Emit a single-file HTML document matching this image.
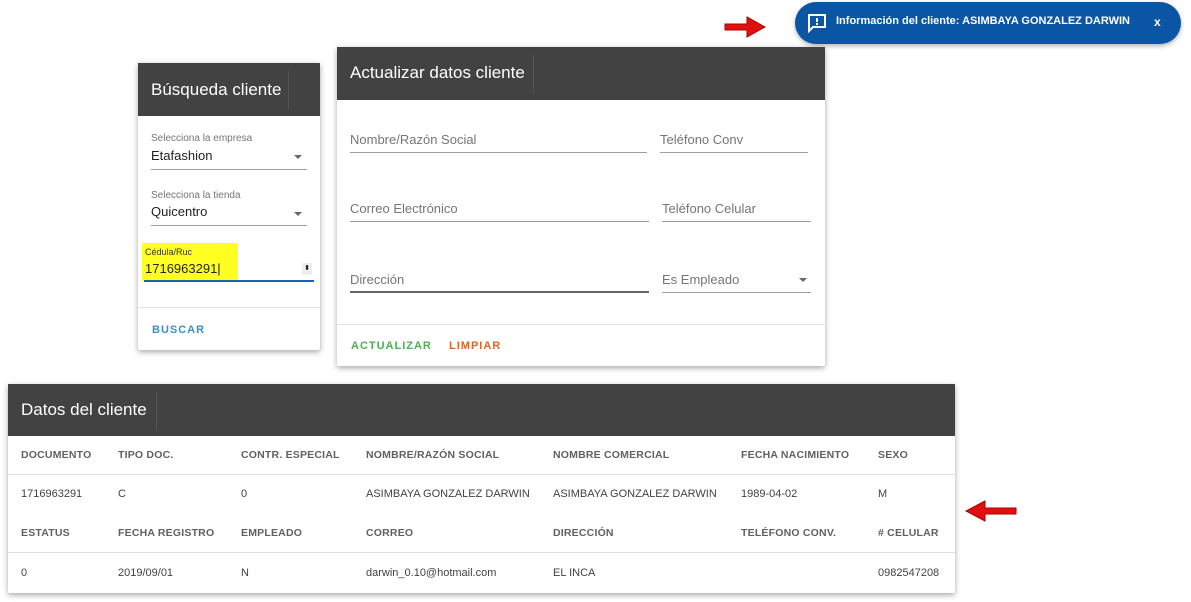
<!DOCTYPE html><html><head><meta charset="utf-8"><style>
body{margin:0;width:1191px;height:602px;background:#fff;font-family:"Liberation Sans",sans-serif;position:relative;overflow:hidden}
.a{position:absolute}
.card{position:absolute;background:#fff;box-shadow:0 2px 6px rgba(0,0,0,.35);border-radius:2px}
.hd{background:#424242;color:#fff;position:absolute;left:0;right:0;top:0}
.lbl{position:absolute;font-size:13px;color:#757575}
.ln{position:absolute;height:1px;background:#9e9e9e}
.th{position:absolute;font-size:10.5px;font-weight:bold;color:#616161;letter-spacing:.2px}
.td{position:absolute;font-size:11px;color:#424242}
.tri{position:absolute;width:0;height:0;border-left:4px solid transparent;border-right:4px solid transparent;border-top:4px solid #666}
</style></head><body>
<!-- toast -->
<div class="a" style="left:795px;top:2px;width:386px;height:42px;background:#0b56a4;border-radius:21px;box-shadow:0 2px 5px rgba(0,0,0,.3)"></div>
<svg class="a" style="left:807px;top:13px" width="20" height="20" viewBox="0 0 20 20"><path d="M2 2h16v12H6l-4 4z" fill="none" stroke="#fff" stroke-width="2"/><rect x="9" y="5" width="2" height="4" fill="#fff"/><rect x="9" y="10" width="2" height="2" fill="#fff"/></svg>
<div class="a" style="left:836px;top:15px;color:#fff;font-size:11px;font-weight:bold">Información del cliente: ASIMBAYA GONZALEZ DARWIN</div>
<div class="a" style="left:1154px;top:15px;color:#fff;font-size:12px;font-weight:bold">x</div>
<svg class="a" style="left:722px;top:15px" width="46" height="24"><path d="M3 9h22V2l18 10-18 10v-7H3z" fill="#e01010" stroke="#a00" stroke-width="1"/></svg>
<svg class="a" style="left:963px;top:499px" width="56" height="24"><path d="M53 9H22V2L3 12l19 10v-7h31z" fill="#e01010" stroke="#a00" stroke-width="1"/></svg>
<!-- search -->
<div class="card" style="left:138px;top:63px;width:182px;height:287px">
<div class="hd" style="height:53px"><span class="a" style="left:13px;top:17px;font-size:17px">Búsqueda cliente</span><div class="a" style="left:150px;top:8px;width:1px;height:38px;background:#555"></div></div>
<div class="lbl" style="left:13px;top:70px;font-size:10px">Selecciona la empresa</div>
<div class="a" style="left:13px;top:85px;font-size:13px;color:#222">Etafashion</div>
<div class="tri" style="left:156px;top:92px"></div>
<div class="ln" style="left:13px;top:106px;width:156px"></div>
<div class="lbl" style="left:13px;top:127px;font-size:10px">Selecciona la tienda</div>
<div class="a" style="left:13px;top:141px;font-size:13px;color:#222">Quicentro</div>
<div class="tri" style="left:156px;top:149px"></div>
<div class="ln" style="left:13px;top:162px;width:156px"></div>
<div class="a" style="left:4px;top:180px;width:96px;height:38px;background:#ffff22"></div>
<div class="a" style="left:7px;top:184px;font-size:9px;color:#333">Cédula/Ruc</div>
<div class="a" style="left:7px;top:198px;font-size:13px;color:#222">1716963291|</div>
<div class="a" style="left:164px;top:200px;width:10px;height:12px;background:#eee;font-size:7px;text-align:center;line-height:12px">⬍</div>
<div class="a" style="left:6px;top:217px;width:170px;height:2px;background:#1e5fb0"></div>
<div class="a" style="left:0;right:0;top:244px;height:1px;background:#e0e0e0"></div>
<div class="a" style="left:14px;top:261px;font-size:11px;font-weight:bold;color:#3a8fd0;letter-spacing:1px">BUSCAR</div>
</div>
<!-- update -->
<div class="card" style="left:337px;top:47px;width:488px;height:319px">
<div class="hd" style="height:53px"><span class="a" style="left:13px;top:16px;font-size:17px">Actualizar datos cliente</span><div class="a" style="left:196px;top:8px;width:1px;height:38px;background:#555"></div></div>
<div class="lbl" style="left:13px;top:85px">Nombre/Razón Social</div><div class="ln" style="left:13px;top:105px;width:297px"></div>
<div class="lbl" style="left:323px;top:85px">Teléfono Conv</div><div class="ln" style="left:323px;top:105px;width:148px"></div>
<div class="lbl" style="left:13px;top:154px">Correo Electrónico</div><div class="ln" style="left:13px;top:174px;width:299px"></div>
<div class="lbl" style="left:325px;top:154px">Teléfono Celular</div><div class="ln" style="left:325px;top:174px;width:149px"></div>
<div class="lbl" style="left:13px;top:225px">Dirección</div><div class="ln" style="left:13px;top:244px;width:299px;height:2px;background:#666"></div>
<div class="lbl" style="left:325px;top:225px">Es Empleado</div><div class="tri" style="left:462px;top:231px"></div><div class="ln" style="left:325px;top:245px;width:149px"></div>
<div class="a" style="left:0;right:0;top:277px;height:1px;background:#e0e0e0"></div>
<div class="a" style="left:14px;top:293px;font-size:11px;font-weight:bold;color:#4caf50;letter-spacing:1px">ACTUALIZAR</div>
<div class="a" style="left:112px;top:293px;font-size:11px;font-weight:bold;color:#e0642a;letter-spacing:1px">LIMPIAR</div>
</div>
<!-- data -->
<div class="card" style="left:8px;top:384px;width:947px;height:209px">
<div class="hd" style="height:52px"><span class="a" style="left:13px;top:16px;font-size:17px">Datos del cliente</span><div class="a" style="left:148px;top:8px;width:1px;height:38px;background:#555"></div></div>
<div class="a" style="left:0;right:0;top:90px;height:1px;background:#e0e0e0"></div>
<div class="a" style="left:0;right:0;top:168px;height:1px;background:#e0e0e0"></div>
</div>
<div class="th" style="left:21px;top:449px">DOCUMENTO</div><div class="th" style="left:118px;top:449px">TIPO DOC.</div><div class="th" style="left:241px;top:449px">CONTR. ESPECIAL</div><div class="th" style="left:366px;top:449px">NOMBRE/RAZÓN SOCIAL</div><div class="th" style="left:553px;top:449px">NOMBRE COMERCIAL</div><div class="th" style="left:741px;top:449px">FECHA NACIMIENTO</div><div class="th" style="left:878px;top:449px">SEXO</div>
<div class="td" style="left:21px;top:488px">1716963291</div><div class="td" style="left:118px;top:488px">C</div><div class="td" style="left:241px;top:488px">0</div><div class="td" style="left:366px;top:488px">ASIMBAYA GONZALEZ DARWIN</div><div class="td" style="left:553px;top:488px">ASIMBAYA GONZALEZ DARWIN</div><div class="td" style="left:741px;top:488px">1989-04-02</div><div class="td" style="left:878px;top:488px">M</div>
<div class="th" style="left:21px;top:527px">ESTATUS</div><div class="th" style="left:118px;top:527px">FECHA REGISTRO</div><div class="th" style="left:241px;top:527px">EMPLEADO</div><div class="th" style="left:366px;top:527px">CORREO</div><div class="th" style="left:553px;top:527px">DIRECCIÓN</div><div class="th" style="left:741px;top:527px">TELÉFONO CONV.</div><div class="th" style="left:878px;top:527px"># CELULAR</div>
<div class="td" style="left:21px;top:567px">0</div><div class="td" style="left:118px;top:567px">2019/09/01</div><div class="td" style="left:241px;top:567px">N</div><div class="td" style="left:366px;top:567px">darwin_0.10@hotmail.com</div><div class="td" style="left:553px;top:567px">EL INCA</div><div class="td" style="left:878px;top:567px">0982547208</div>
</body></html>
